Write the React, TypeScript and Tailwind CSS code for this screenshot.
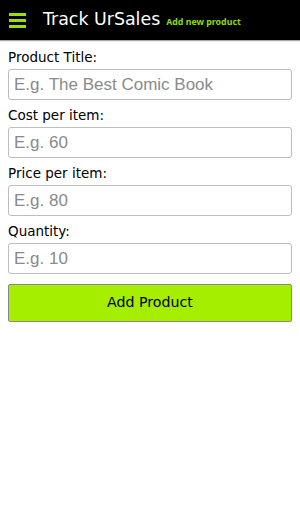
const fields = [
  { label: 'Product Title:', placeholder: 'E.g. The Best Comic Book' },
  { label: 'Cost per item:', placeholder: 'E.g. 60' },
  { label: 'Price per item:', placeholder: 'E.g. 80' },
  { label: 'Quantity:', placeholder: 'E.g. 10' },
]

export default function App() {
  return (
    <div className="w-[300px] h-[532px] bg-white font-['DejaVu_Sans',sans-serif]">
      <div className="h-10 bg-black flex items-center shadow-[0_1px_1px_rgba(0,0,0,0.35)]">
        <div className="ml-[9px] w-[17px] flex flex-col gap-[3px]">
          <div className="h-[3px] bg-[#9be000]" />
          <div className="h-[3px] bg-[#9be000]" />
          <div className="h-[3px] bg-[#9be000]" />
        </div>
        <span className="ml-[17px] text-white text-[17.4px] leading-none">Track UrSales</span>
        <span className="ml-[6px] mt-[5px] text-[#8fdc00] text-[8.8px] font-bold leading-none font-['Noto_Sans',sans-serif]">Add new product</span>
      </div>

      <div className="px-2 pt-[6px]">
        {fields.map(f => (
          <div key={f.label}>
            <label className="block text-[13.5px] text-black leading-[22px]">{f.label}</label>
            <input
              placeholder={f.placeholder}
              className="mt-[1px] mb-[4px] w-full h-[31px] px-[5px] border border-[#bdbdbd] rounded-[3px] text-[17px] font-['Liberation_Sans',sans-serif] placeholder:text-[#8a8a8a] outline-none"
            />
          </div>
        ))}
        <button className="mt-[6px] w-full h-[38px] bg-[#a5ee00] border border-[#8a8a8a] rounded-[2px] text-[14.2px] text-black">
          Add Product
        </button>
      </div>
    </div>
  )
}
